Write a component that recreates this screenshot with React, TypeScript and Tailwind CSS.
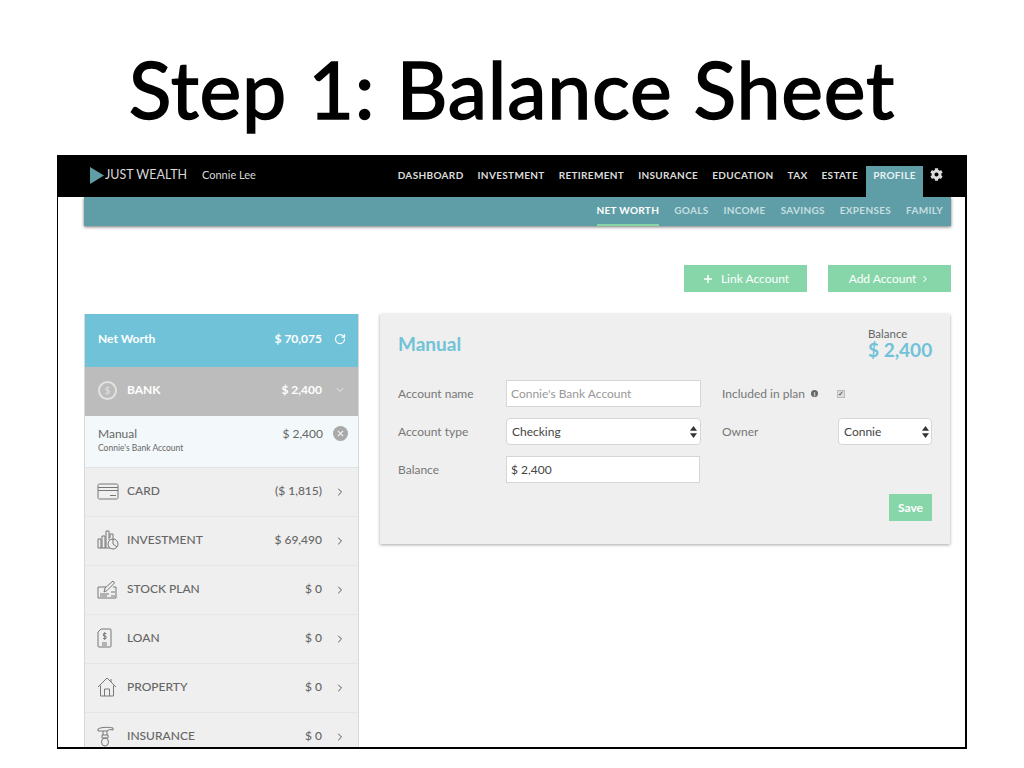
import { ChevronDown, ChevronRight, Plus, RotateCw, X } from "lucide-react";
import { FaCog } from "react-icons/fa";

const NAV = ["DASHBOARD", "INVESTMENT", "RETIREMENT", "INSURANCE", "EDUCATION", "TAX", "ESTATE"];
const SUBNAV = ["GOALS", "INCOME", "SAVINGS", "EXPENSES", "FAMILY"];

function CardIcon() {
  return (
    <svg width="22" height="17" viewBox="0 0 22 17" fill="none" stroke="#777" strokeWidth="1">
      <rect x="1" y="1" width="20" height="15" rx="1.5" />
      <path d="M1 4.5h20M1 7.5h20M13 12.5h6" />
    </svg>
  );
}

function InvestmentIcon() {
  return (
    <svg width="22" height="20" viewBox="0 0 22 20" fill="none" stroke="#777" strokeWidth="1">
      <path d="M1 18V9h3v9M5 18V6h3v12M9 18V1h3v9M13 8V4h3v5M1 18h12" />
      <circle cx="16" cy="14" r="5" />
      <path d="M16 14V9M16 14l4 3" />
    </svg>
  );
}

function StockIcon() {
  return (
    <svg width="20" height="19" viewBox="0 0 20 19" fill="none" stroke="#777" strokeWidth="1">
      <path d="M9 7H1v11h18V7h-3" />
      <path d="M7 12l1-4 8-7 1.500 2-7.500 7.500z" />
      <path d="M3 14h9M3 16h7M14 12h4M14 16h4" />
    </svg>
  );
}

function LoanIcon() {
  return (
    <svg width="15" height="20" viewBox="0 0 15 20" fill="none" stroke="#777" strokeWidth="1">
      <path d="M4 1h9a1 1 0 0 1 1 1v16a1 1 0 0 1-1 1H2a1 1 0 0 1-1-1V4z" />
      <path d="M5 15h5M5 17h5" />
      <path d="M9.500 5.500H6.500V8h2.500v2.500H6M7.700 4v8" strokeWidth="0.9" />
    </svg>
  );
}

function HouseIcon() {
  return (
    <svg width="20" height="20" viewBox="0 0 20 20" fill="none" stroke="#777" strokeWidth="1">
      <path d="M1 10l9-9 9 9M3.500 8.500V19h13V8.500M14 2v3" />
      <path d="M7.500 19v-7h5v7" />
    </svg>
  );
}

function InsuranceIcon() {
  return (
    <svg width="17" height="21" viewBox="0 0 17 21" fill="none" stroke="#777" strokeWidth="1">
      <path d="M1 3c3-2 11-2 15-1v2c-3-1-5 0-6 1H6C4 5 2 5 1 5z" />
      <path d="M6 5v4M10 5v4M5 9h6v3H5z" />
      <ellipse cx="8" cy="16" rx="3.500" ry="4" />
    </svg>
  );
}

function SelectArrows() {
  return (
    <svg width="7" height="12" viewBox="0 0 7 12" fill="#333">
      <path d="M3.500 0L7 4.800H0zM3.500 12L0 7.200h7z" />
    </svg>
  );
}

const ROWS = [
  { label: "CARD", value: "($ 1,815)", icon: <CardIcon /> },
  { label: "INVESTMENT", value: "$ 69,490", icon: <InvestmentIcon /> },
  { label: "STOCK PLAN", value: "$ 0", icon: <StockIcon /> },
  { label: "LOAN", value: "$ 0", icon: <LoanIcon /> },
  { label: "PROPERTY", value: "$ 0", icon: <HouseIcon /> },
  { label: "INSURANCE", value: "$ 0", icon: <InsuranceIcon /> },
];

export default function App() {
  return (
    <div className="w-[1024px] h-[768px] overflow-hidden bg-white font-['Lato',sans-serif]">
      <h1 className="h-[155px] pt-[44px] text-center text-[79px] leading-[90px] font-normal text-black tracking-[0.8px] [-webkit-text-stroke:1.5px_black]">
        Step 1: Balance Sheet
      </h1>

      <div className="ml-[57px] w-[910px] h-[594px] border-2 border-l border-t border-black overflow-hidden">
        {/* top nav */}
        <div className="h-[41px] bg-black flex pl-[32px]">
          <div className="flex items-center pb-[2px]">
            <svg width="14" height="17" viewBox="0 0 14 17" className="mr-[1px]">
              <path d="M0 0l14 8.500L0 17z" fill="#5f9ea6" />
            </svg>
            <span className="w-[97px] whitespace-nowrap text-[12.500px] text-[#d8d8d8]">JUST WEALTH</span>
            <span className="whitespace-nowrap text-[11px] text-[#d8d8d8]">Connie Lee</span>
          </div>
          <div className="ml-auto flex h-full">
            <div className="flex items-center gap-[14px] mr-[8px] pb-[3px]">
              {NAV.map((n) => (
                <span key={n} className="whitespace-nowrap text-[10px] font-bold tracking-[0.33px] text-[#dcdcdc]">{n}</span>
              ))}
            </div>
            <div className="mt-[10px] w-[57px] h-[31px] bg-[#5f9ea6] flex items-center justify-center text-[10px] font-bold tracking-[0.33px] text-[#e8f1f2] pb-[13px]">
              PROFILE
            </div>
            <div className="w-[42px] flex items-center pl-[7px] pb-[4px]">
              <FaCog size={13} color="#dcdcdc" />
            </div>
          </div>
        </div>

        {/* sub nav */}
        <div className="ml-[26px] mr-[14px] h-[29px] bg-[#5f9ea6] shadow-[0_1px_3px_rgba(0,0,0,0.55)] flex justify-end pr-[8px] gap-[15px]">
          <span className="h-full flex items-center border-b-2 border-[#86d6a6] text-[10px] font-bold tracking-[0.3px] text-white">NET WORTH</span>
          {SUBNAV.map((s) => (
            <span key={s} className="h-full flex items-center pb-[2px] text-[10px] font-bold tracking-[0.3px] text-[#c5dfe2]">{s}</span>
          ))}
        </div>

        {/* action buttons */}
        <div className="mt-[39px] mr-[14px] flex justify-end gap-[21px]">
          <button className="w-[123px] h-[27px] bg-[#86d6a9] text-white text-[12px] flex items-center justify-center">
            <Plus size={12} strokeWidth={3} className="mr-[7px]" />
            Link Account
          </button>
          <button className="w-[123px] h-[27px] bg-[#86d6a9] text-white text-[12px] flex items-center justify-center">
            Add Account
            <ChevronRight size={10} strokeWidth={2.5} className="ml-[4px]" />
          </button>
        </div>

        <div className="mt-[22px] ml-[26px] mr-[15px] flex items-start gap-[21px]">
          {/* left panel */}
          <div className="w-[275px] shrink-0 bg-[#efefef] border-x border-[#d8d8d8]">
            <div className="h-[53px] bg-[#70c2d8] flex items-center pl-[13px] pr-[12px] pb-[3px] text-white text-[12px] font-bold">
              <span>Net Worth</span>
              <span className="ml-auto mr-[12px]">$ 70,075</span>
              <RotateCw size={12} strokeWidth={2.5} />
            </div>
            <div className="h-[49px] bg-[#bcbcbc] flex items-center pl-[13px] pr-[12px] pb-[3px] text-white text-[12px] font-bold">
              <span className="w-[19px] h-[19px] rounded-full border-2 border-[#e2e2e2] text-[#e2e2e2] flex items-center justify-center text-[10px] font-normal">$</span>
              <span className="ml-[10px]">BANK</span>
              <span className="ml-auto mr-[12px]">$ 2,400</span>
              <ChevronDown size={12} className="text-[#e8e8e8]" />
            </div>
            <div className="h-[52px] bg-[#f3f9fa] border-b border-[#dfe3e3] flex items-start pl-[13px] pr-[10px] pt-[10px] text-[#666]">
              <div>
                <div className="text-[12px] leading-[15px]">Manual</div>
                <div className="text-[8.500px] leading-[15px]">Connie's Bank Account</div>
              </div>
              <span className="ml-auto mr-[10px] text-[12px] leading-[15px]">$ 2,400</span>
              <span className="w-[15px] h-[15px] rounded-full bg-[#a9a9a9] flex items-center justify-center">
                <X size={9} strokeWidth={3} className="text-[#eee]" />
              </span>
            </div>
            {ROWS.map((r) => (
              <div key={r.label} className="h-[49px] border-b border-[#e6e6e6] flex items-center pl-[12px] pr-[12px] pb-[2px] text-[#666] text-[12px] font-medium">
                <span className="w-[30px] flex items-center justify-start">{r.icon}</span>
                <span>{r.label}</span>
                <span className="ml-auto mr-[12px]">{r.value}</span>
                <ChevronRight size={12} strokeWidth={2} className="text-[#555] mt-[2px]" />
              </div>
            ))}
          </div>

          {/* detail panel */}
          <div className="flex-1 h-[230px] bg-[#efefef] shadow-[0_1px_3px_rgba(0,0,0,0.35)] pl-[18px] pr-[18px] pt-[13px] text-[#777] text-[12px]">
            <div className="flex justify-between items-start h-[53px]">
              <div className="pt-[2px] text-[19px] leading-[30px] font-bold text-[#70c2d8]">Manual</div>
              <div className="w-[64px] whitespace-nowrap">
                <div className="text-[11.500px] leading-[13px] text-[#666]">Balance</div>
                <div className="text-[19px] leading-[20px] font-bold text-[#70c2d8]">$ 2,400</div>
              </div>
            </div>
            <div className="flex items-center h-[27px]">
              <span className="w-[108px]">Account name</span>
              <div className="w-[195px] h-[27px] bg-white border border-[#d6d6d6] pl-[4px] flex items-center text-[#999]">Connie's Bank Account</div>
              <span className="ml-[21px] w-[89px] whitespace-nowrap">Included in plan</span>
              <span className="w-[7px] h-[7px] rounded-full bg-[#666] text-[6px] leading-[7px] text-white text-center font-bold">i</span>
              <span className="ml-[19px] w-[8px] h-[8px] bg-[#ddd] border border-[#bbb] flex items-center justify-center text-[7px] leading-none text-[#333]">✓</span>
            </div>
            <div className="flex items-center h-[27px] mt-[11px]">
              <span className="w-[108px]">Account type</span>
              <div className="w-[195px] h-[27px] bg-white border border-[#d6d6d6] rounded-[4px] pl-[5px] pr-[3px] flex items-center justify-between text-[#444]">
                Checking <SelectArrows />
              </div>
              <span className="ml-[21px] w-[116px]">Owner</span>
              <div className="w-[94px] h-[27px] bg-white border border-[#d6d6d6] rounded-[4px] pl-[5px] pr-[2px] flex items-center justify-between text-[#444]">
                Connie <SelectArrows />
              </div>
            </div>
            <div className="flex items-center h-[27px] mt-[11px]">
              <span className="w-[108px]">Balance</span>
              <div className="w-[194px] h-[27px] bg-white border border-[#d6d6d6] pl-[4px] flex items-center text-[#444]">$ 2,400</div>
            </div>
            <div className="flex justify-end mt-[11px]">
              <button className="w-[43px] h-[27px] bg-[#86d6a9] text-white text-[12px] font-bold">Save</button>
            </div>
          </div>
        </div>
      </div>
    </div>
  );
}
